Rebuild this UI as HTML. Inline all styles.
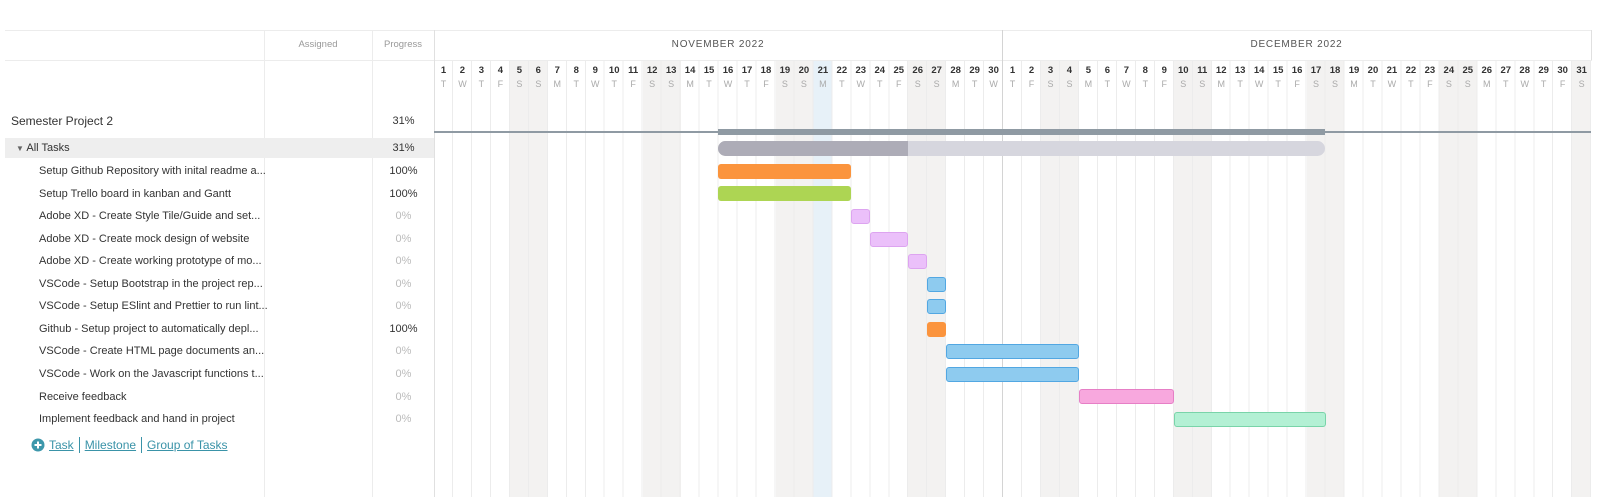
<!DOCTYPE html>
<html><head><meta charset="utf-8"><style>
*{margin:0;padding:0;box-sizing:border-box}
body{width:1597px;height:497px;background:#fff;position:relative;overflow:hidden;font-family:"Liberation Sans",sans-serif;color:#333}
.a{position:absolute}
.vl{position:absolute;width:1px;background:#ececec}
.hl{position:absolute;height:1px;background:#ececec}
.days{position:absolute;left:434px;top:64px;display:flex}
.days div{width:18.97px;text-align:center;font-size:9.5px;font-weight:bold;color:#333;line-height:14px}
.days div span{display:block;font-weight:normal;color:#aaa;font-size:9px;line-height:12px}
.grid{position:absolute;left:434px;top:60px;width:1157px;height:437px;background:repeating-linear-gradient(90deg,transparent 0,transparent 17.97px,#ececec 17.97px,#ececec 18.97px)}
.we{position:absolute;top:60px;height:437px;width:37.94px;background:#f3f2f1}
.t{position:absolute;left:39px;font-size:11px;color:#333;white-space:nowrap;line-height:14px}
.p{position:absolute;left:373px;width:61px;text-align:center;font-size:11px;line-height:14px;color:#333}
.p.z{color:#bbb}
.bar{position:absolute;height:15px;border-radius:3px}
.or{background:#fb943d}
.gr{background:#add553}
.pk{background:#ebc0fa;border:1px solid #dda4f0}
.bl{background:#8ecbef;border:1px solid #52a7e2}
.pp{background:#f8a8de;border:1px solid #e67fc6}
.mg{background:#b3f0d4;border:1px solid #79d4a9}
.lk{color:#3a93a8;text-decoration:underline;font-size:12px}
</style></head><body>
<!-- weekend shading -->
<div class="we" style="left:509.9px"></div>
<div class="we" style="left:642.7px"></div>
<div class="we" style="left:775.5px"></div>
<div class="a" style="left:813.4px;top:60px;width:18.97px;height:437px;background:#e7f1f8"></div>
<div class="we" style="left:908.3px"></div>
<div class="we" style="left:1040.9px"></div>
<div class="we" style="left:1173.7px"></div>
<div class="we" style="left:1306.5px"></div>
<div class="we" style="left:1439.3px"></div>
<div class="we" style="left:1572px;width:19px"></div>
<div class="grid"></div>
<!-- frame lines -->
<div class="hl" style="left:5px;top:30px;width:1587px"></div>
<div class="hl" style="left:5px;top:60px;width:1587px"></div>
<div class="vl" style="left:264px;top:30px;height:467px"></div>
<div class="vl" style="left:372px;top:30px;height:467px"></div>
<div class="vl" style="left:434px;top:30px;height:467px;background:#e0e0e0"></div>
<div class="vl" style="left:1002px;top:30px;height:467px;background:#d4d4d4"></div>
<div class="vl" style="left:1591px;top:30px;height:30px;background:#e0e0e0"></div>
<!-- header -->
<div class="a" style="left:264px;width:108px;top:39px;text-align:center;font-size:9.5px;color:#999">Assigned</div>
<div class="a" style="left:372px;width:62px;top:39px;text-align:center;font-size:9.5px;color:#999">Progress</div>
<div class="a" style="left:434px;width:568px;top:39px;text-align:center;font-size:10px;color:#555;letter-spacing:0.8px">NOVEMBER 2022</div>
<div class="a" style="left:1002px;width:589px;top:39px;text-align:center;font-size:10px;color:#555;letter-spacing:0.8px">DECEMBER 2022</div>
<div class="days">
<div>1<span>T</span></div><div>2<span>W</span></div><div>3<span>T</span></div><div>4<span>F</span></div><div>5<span>S</span></div><div>6<span>S</span></div><div>7<span>M</span></div><div>8<span>T</span></div><div>9<span>W</span></div><div>10<span>T</span></div><div>11<span>F</span></div><div>12<span>S</span></div><div>13<span>S</span></div><div>14<span>M</span></div><div>15<span>T</span></div><div>16<span>W</span></div><div>17<span>T</span></div><div>18<span>F</span></div><div>19<span>S</span></div><div>20<span>S</span></div><div>21<span>M</span></div><div>22<span>T</span></div><div>23<span>W</span></div><div>24<span>T</span></div><div>25<span>F</span></div><div>26<span>S</span></div><div>27<span>S</span></div><div>28<span>M</span></div><div>29<span>T</span></div><div>30<span>W</span></div>
<div>1<span>T</span></div><div>2<span>F</span></div><div>3<span>S</span></div><div>4<span>S</span></div><div>5<span>M</span></div><div>6<span>T</span></div><div>7<span>W</span></div><div>8<span>T</span></div><div>9<span>F</span></div><div>10<span>S</span></div><div>11<span>S</span></div><div>12<span>M</span></div><div>13<span>T</span></div><div>14<span>W</span></div><div>15<span>T</span></div><div>16<span>F</span></div><div>17<span>S</span></div><div>18<span>S</span></div><div>19<span>M</span></div><div>20<span>T</span></div><div>21<span>W</span></div><div>22<span>T</span></div><div>23<span>F</span></div><div>24<span>S</span></div><div>25<span>S</span></div><div>26<span>M</span></div><div>27<span>T</span></div><div>28<span>W</span></div><div>29<span>T</span></div><div>30<span>F</span></div><div>31<span>S</span></div>
</div>
<!-- left rows -->
<div class="a" style="left:11px;top:114px;font-size:12px;color:#333">Semester Project 2</div>
<div class="p" style="top:114px">31%</div>
<div class="a" style="left:5px;top:138px;width:429px;height:20px;background:#eeeeee"></div>
<div class="a" style="left:16px;top:141px;font-size:11px;line-height:14px"><span style="font-size:8px;color:#666">&#9660;</span> All Tasks</div>
<div class="p" style="top:141px">31%</div>
<div class="t" style="top:164px">Setup Github Repository with inital readme a...</div><div class="p" style="top:164px">100%</div>
<div class="t" style="top:187px">Setup Trello board in kanban and Gantt</div><div class="p" style="top:187px">100%</div>
<div class="t" style="top:209px">Adobe XD - Create Style Tile/Guide and set...</div><div class="p z" style="top:209px">0%</div>
<div class="t" style="top:232px">Adobe XD - Create mock design of website</div><div class="p z" style="top:232px">0%</div>
<div class="t" style="top:254px">Adobe XD - Create working prototype of mo...</div><div class="p z" style="top:254px">0%</div>
<div class="t" style="top:277px">VSCode - Setup Bootstrap in the project rep...</div><div class="p z" style="top:277px">0%</div>
<div class="t" style="top:299px">VSCode - Setup ESlint and Prettier to run lint...</div><div class="p z" style="top:299px">0%</div>
<div class="t" style="top:322px">Github - Setup project to automatically depl...</div><div class="p" style="top:322px">100%</div>
<div class="t" style="top:344px">VSCode - Create HTML page documents an...</div><div class="p z" style="top:344px">0%</div>
<div class="t" style="top:367px">VSCode - Work on the Javascript functions t...</div><div class="p z" style="top:367px">0%</div>
<div class="t" style="top:390px">Receive feedback</div><div class="p z" style="top:390px">0%</div>
<div class="t" style="top:412px">Implement feedback and hand in project</div><div class="p z" style="top:412px">0%</div>
<div class="a" style="left:31px;top:437px;display:flex;align-items:center;gap:0;white-space:nowrap">
<svg width="14" height="14" viewBox="0 0 14 14"><circle cx="7" cy="7" r="6.5" fill="#3d97ab"/><path d="M7 3.5v7M3.5 7h7" stroke="#fff" stroke-width="2"/></svg>
<a class="lk" style="margin-left:4px">Task</a><span style="display:inline-block;width:1px;height:16px;background:#3a93a8;margin:0 5px"></span><a class="lk">Milestone</a><span style="display:inline-block;width:1px;height:16px;background:#3a93a8;margin:0 5px"></span><a class="lk">Group of Tasks</a>
</div>
<!-- summary line -->
<div class="a" style="left:434px;top:131px;width:1157px;height:2px;background:#8f9aa3"></div>
<div class="a" style="left:718px;top:129px;width:607px;height:6px;background:#8f9aa3"></div>
<div class="a" style="left:718px;top:141px;width:607px;height:15px;border-radius:8px;background:#d6d6de;overflow:hidden"><div style="width:190px;height:15px;background:#adacb7"></div></div>
<!-- bars -->
<div class="bar or" style="left:718px;top:164px;width:133px"></div>
<div class="bar gr" style="left:718px;top:186px;width:133px"></div>
<div class="bar pk" style="left:851px;top:209px;width:19px"></div>
<div class="bar pk" style="left:870px;top:232px;width:38px"></div>
<div class="bar pk" style="left:908px;top:254px;width:19px"></div>
<div class="bar bl" style="left:927px;top:277px;width:19px"></div>
<div class="bar bl" style="left:927px;top:299px;width:19px"></div>
<div class="bar or" style="left:927px;top:322px;width:19px"></div>
<div class="bar bl" style="left:946px;top:344px;width:133px"></div>
<div class="bar bl" style="left:946px;top:367px;width:133px"></div>
<div class="bar pp" style="left:1079px;top:389px;width:95px"></div>
<div class="bar mg" style="left:1174px;top:412px;width:152px"></div>
</body></html>
